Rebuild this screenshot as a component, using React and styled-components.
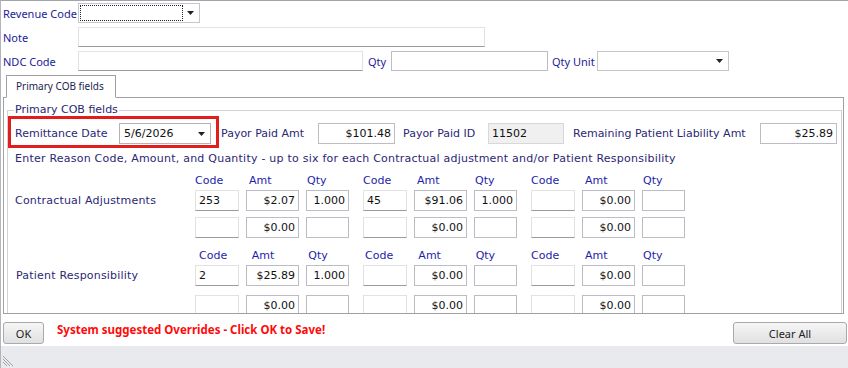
import React from 'react'
import styled, { createGlobalStyle } from 'styled-components'

const UI_FONT = `"Noto Sans", "Liberation Sans", sans-serif`
const FORM_FONT = `"DejaVu Sans", Verdana, sans-serif`
const NAVY = '#1c1c98'
const INK = '#2b2774'
const HEAD = '#1e1eaa'

const GlobalStyle = createGlobalStyle`
    html, body {
        margin: 0;
        padding: 0;
        background: #fff;
    }
    body {
        font-family: ${UI_FONT};
    }
    * {
        box-sizing: border-box;
    }
`

const Window = styled.div`
    width: 848px;
    height: 368px;
    overflow: hidden;
    display: flex;
    flex-direction: column;
    background: #fff;
    border-top: 1px solid #a3a3ab;
    border-left: 1px solid #b4b4bc;
`

const TopForm = styled.div`
    display: flex;
    flex-direction: column;
    gap: 4px;
    padding: 2px 0 0 2px;
`

const FieldRow = styled.div`
    display: flex;
    align-items: center;
    height: 20px;
`

const TopLabel = styled.span`
    width: ${p => p.$w || 75}px;
    padding-left: ${p => p.$pad || 0}px;
    font-size: 11px;
    color: ${NAVY};
    white-space: nowrap;
`

const Box = styled.div`
    display: flex;
    align-items: center;
    flex-shrink: 0;
    width: ${p => p.$w}px;
    height: ${p => p.$h || 20}px;
    background: ${p => (p.$disabled ? '#f0f0f0' : '#fff')};
    border: 1px solid ${p => (p.$disabled ? '#d8d8d8' : '#bcbcc4')};
    ${p => p.$sunken && `
        border-color: #e2e2e2 #e2e2e2 #9a9a9a #e2e2e2;
    `}
    font-family: ${FORM_FONT};
    font-size: 11px;
    color: #111;
    justify-content: ${p => (p.$right ? 'flex-end' : 'flex-start')};
    padding: 0 3px;
    white-space: nowrap;
`

const Combo = styled.div`
    display: flex;
    align-items: center;
    flex-shrink: 0;
    width: ${p => p.$w}px;
    height: ${p => p.$h || 20}px;
    border: 1px solid ${p => p.$border || '#c6c6ce'};
    background: #fff;
    padding: 0 5px 0 3px;
    font-family: ${FORM_FONT};
    font-size: 11px;
    color: #111;
`

const ComboText = styled.span`
    flex: 1;
    padding-left: 1px;
`

const FocusRing = styled.span`
    width: 103px;
    height: 16px;
    margin-left: -2px;
    border: 1px dotted #222;
`

const Spacer = styled.span`
    flex: 1;
`

const Arrow = () => (
    <svg width="7" height="4" viewBox="0 0 7 4">
        <path d="M0 0H7L3.5 4Z" fill="#222" />
    </svg>
)

const TabStrip = styled.div`
    display: flex;
    height: 22px;
    margin-top: 4px;
    padding-left: 5px;
`

const Tab = styled.div`
    position: relative;
    z-index: 1;
    width: 110px;
    height: 23px;
    padding-left: 9px;
    border: 1px solid #a0a0a0;
    border-bottom-color: #fff;
    background: #fff;
    font-size: 10px;
    line-height: 20px;
    color: #1c1c52;
`

const TabPanel = styled.div`
    width: 841px;
    height: 217px;
    margin-left: 2px;
    border: 1px solid #a0a0a0;
    overflow: hidden;
    padding: 0 1px 0 3px;
`

const GroupBox = styled.fieldset`
    margin: 5px 0 0 0;
    padding: 0;
    min-width: 0;
    height: 240px;
    border: 1px solid #d2d2d6;
`

const Legend = styled.legend`
    margin-left: 6px;
    padding: 0 1px;
    font-family: ${FORM_FONT};
    font-size: 11px;
    line-height: 14px;
    color: ${INK};
`

const InfoRow = styled.div`
    display: flex;
    align-items: flex-start;
    margin-top: -1px;
`

const Highlight = styled.div`
    display: flex;
    align-items: center;
    width: 211px;
    height: 32px;
    padding: 4px 5px 1px 4px;
    border: 3px solid #e11d1d;
`

const Pair = styled.div`
    display: flex;
    align-items: center;
    height: 21px;
    margin-top: ${p => p.$top || 0}px;
`

const PanelLabel = styled.span`
    width: ${p => p.$w}px;
    padding-left: ${p => p.$pad || 0}px;
    flex-shrink: 0;
    font-family: ${FORM_FONT};
    font-size: 11px;
    color: ${INK};
    white-space: nowrap;
`

const Instruction = styled.div`
    margin-top: 4px;
    padding-left: 7px;
    font-family: ${FORM_FONT};
    font-size: 11px;
    line-height: 14px;
    letter-spacing: 0.23px;
    color: ${INK};
    white-space: nowrap;
`

const Block = styled.div`
    display: flex;
    gap: 14px;
    margin-top: ${p => p.$top}px;
    padding-left: 7px;
`

const Side = styled.div`
    width: 166px;
    padding-top: 16px;
    padding-left: ${p => p.$pad || 0}px;
    font-family: ${FORM_FONT};
    font-size: 11px;
    line-height: 21px;
    letter-spacing: 0.2px;
    color: ${INK};
    white-space: nowrap;
`

const Group = styled.div`
    display: flex;
    flex-direction: column;
    width: 154px;
`

const GroupHead = styled.div`
    display: flex;
    gap: 7px;
    height: 14px;
    margin-bottom: 2px;
    padding-left: ${p => p.$shift}px;
    font-family: ${FORM_FONT};
    font-size: 11px;
    line-height: 14px;
    color: ${HEAD};
`

const HeadCell = styled.span`
    width: ${p => p.$w}px;
    padding-left: ${p => p.$pad}px;
`

const CellRow = styled.div`
    display: flex;
    gap: 7px;
    margin-top: ${p => p.$top || 0}px;
`

const Footer = styled.div`
    display: flex;
    align-items: flex-start;
    height: 32px;
    padding: 8px 1px 0 2px;
`

const Button = styled.button`
    width: ${p => p.$w}px;
    height: 22px;
    margin-left: ${p => (p.$push ? 'auto' : '0')};
    padding: 0;
    border: 1px solid #a9a9ae;
    border-radius: 3px;
    background: linear-gradient(#f6f6f6, #e0e0e2);
    font-family: ${UI_FONT};
    font-size: 11px;
    color: #222;
`

const Warning = styled.span`
    margin-left: 13px;
    font-family: ${UI_FONT};
    font-size: 11.5px;
    font-weight: bold;
    line-height: 15px;
    color: #ff0a0a;
    white-space: nowrap;
`

const StatusBar = styled.div`
    flex: 1;
    display: flex;
    align-items: flex-end;
    background: #e9eaee;
    padding: 0 0 1px 2px;
`

const Grip = () => (
    <svg width="12" height="12" viewBox="0 0 12 12">
        <path d="M0 1L10 11M0 4L7 11M0 7L4 11" stroke="#a4a4a8" strokeWidth="1" />
    </svg>
)

const WIDTHS = { code: 44, amt: 53, qty: 43 }

const AdjGroup = ({ shift, row1, row2 }) => (
    <Group>
        <GroupHead $shift={shift}>
            <HeadCell $w={WIDTHS.code} $pad={0}>Code</HeadCell>
            <HeadCell $w={WIDTHS.amt} $pad={3}>Amt</HeadCell>
            <HeadCell $w={WIDTHS.qty} $pad={1}>Qty</HeadCell>
        </GroupHead>
        {[row1, row2].map((r, i) => (
            <CellRow key={i} $top={i ? r.gap : 0}>
                <Box $w={WIDTHS.code} $h={21} $sunken>{r.code}</Box>
                <Box $w={WIDTHS.amt} $h={21} $right>{r.amt}</Box>
                <Box $w={WIDTHS.qty} $h={21} $right>{r.qty}</Box>
            </CellRow>
        ))}
    </Group>
)

const AdjBlock = ({ title, top, gap, sidePad, shifts, groups }) => (
    <Block $top={top}>
        <Side $pad={sidePad}>{title}</Side>
        {groups.map((g, i) => (
            <AdjGroup
                key={i}
                shift={shifts[i]}
                row1={g[0]}
                row2={{ ...g[1], gap }}
            />
        ))}
    </Block>
)

const empty = { code: '', amt: '$0.00', qty: '' }

const contractual = [
    [{ code: '253', amt: '$2.07', qty: '1.000' }, empty],
    [{ code: '45', amt: '$91.06', qty: '1.000' }, empty],
    [empty, empty],
]

const patient = [
    [{ code: '2', amt: '$25.89', qty: '1.000' }, empty],
    [empty, empty],
    [empty, empty],
]

const App = () => {
    return (
        <Window>
            <GlobalStyle />
            <TopForm>
                <FieldRow>
                    <TopLabel>Revenue Code</TopLabel>
                    <Combo $w={122}>
                        <FocusRing />
                        <Spacer />
                        <Arrow />
                    </Combo>
                </FieldRow>
                <FieldRow>
                    <TopLabel>Note</TopLabel>
                    <Box $w={407} $sunken />
                </FieldRow>
                <FieldRow>
                    <TopLabel>NDC Code</TopLabel>
                    <Box $w={285} $sunken />
                    <TopLabel $w={28} $pad={5}>Qty</TopLabel>
                    <Box $w={157} />
                    <TopLabel $w={49} $pad={4}>Qty Unit</TopLabel>
                    <Combo $w={132}>
                        <Spacer />
                        <Arrow />
                    </Combo>
                </FieldRow>
            </TopForm>

            <TabStrip>
                <Tab>Primary COB fields</Tab>
            </TabStrip>
            <TabPanel>
                <GroupBox>
                    <Legend>Primary COB fields</Legend>
                    <InfoRow>
                        <Highlight>
                            <PanelLabel $w={104}>Remittance Date</PanelLabel>
                            <Combo $w={92} $h={21} $border="#b4b4b8">
                                <ComboText>5/6/2026</ComboText>
                                <Arrow />
                            </Combo>
                        </Highlight>
                        <Pair $top={7}>
                            <PanelLabel $w={99} $pad={2}>Payor Paid Amt</PanelLabel>
                            <Box $w={77} $h={21} $right>$101.48</Box>
                        </Pair>
                        <Pair $top={7}>
                            <PanelLabel $w={93} $pad={8}>Payor Paid ID</PanelLabel>
                            <Box $w={76} $h={21} $disabled>11502</Box>
                        </Pair>
                        <Pair $top={7}>
                            <PanelLabel $w={196} $pad={9}>Remaining Patient Liability Amt</PanelLabel>
                            <Box $w={77} $h={21} $right>$25.89</Box>
                        </Pair>
                    </InfoRow>
                    <Instruction>
                        Enter Reason Code, Amount, and Quantity - up to six for each Contractual adjustment and/or Patient Responsibility
                    </Instruction>
                    <AdjBlock
                        title="Contractual Adjustments"
                        top={8}
                        gap={6}
                        sidePad={0}
                        shifts={[0, 0, 0]}
                        groups={contractual}
                    />
                    <AdjBlock
                        title="Patient Responsibility"
                        top={11}
                        gap={9}
                        sidePad={1}
                        shifts={[4, 2, 0]}
                        groups={patient}
                    />
                </GroupBox>
            </TabPanel>

            <Footer>
                <Button $w={41}>OK</Button>
                <Warning>System suggested Overrides - Click OK to Save!</Warning>
                <Button $w={114} $push>Clear All</Button>
            </Footer>
            <StatusBar>
                <Grip />
            </StatusBar>
        </Window>
    )
}

export default App
